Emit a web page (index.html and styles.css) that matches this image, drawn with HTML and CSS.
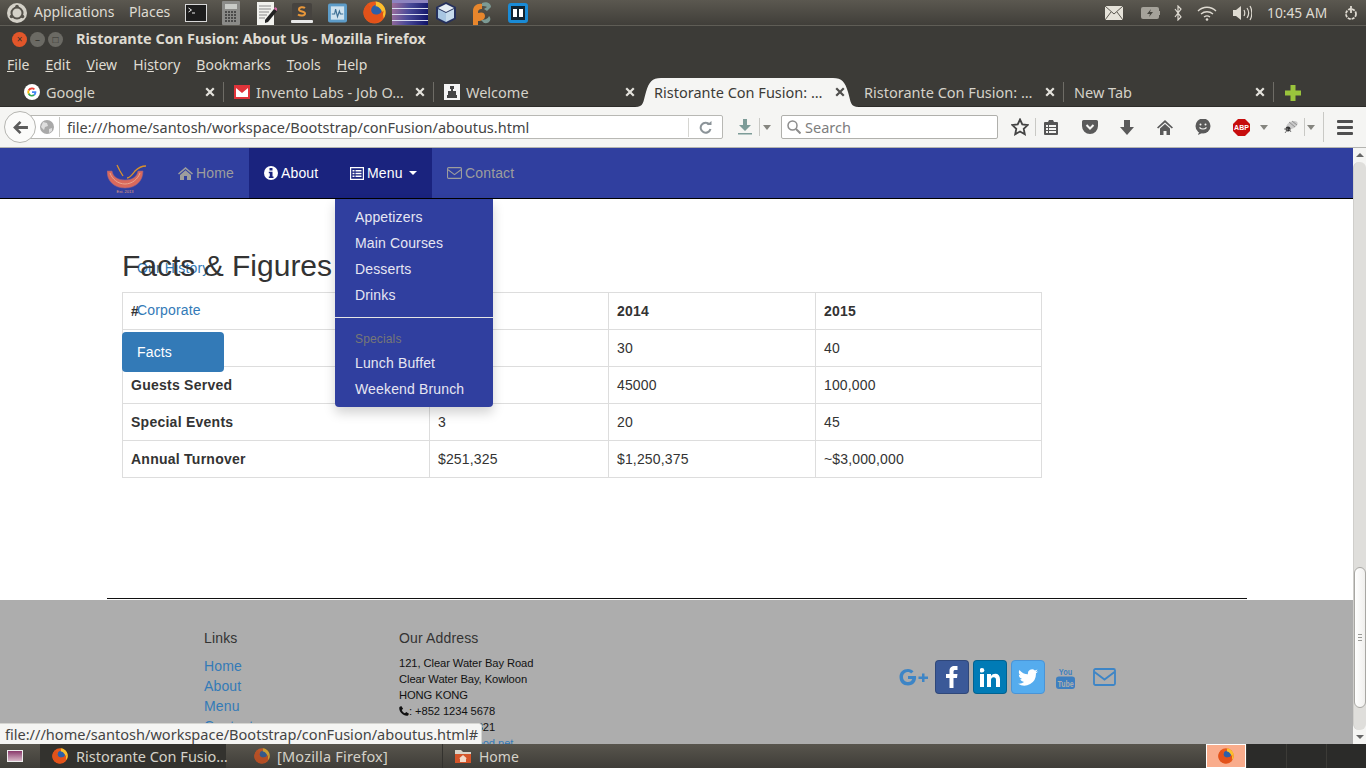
FILE: index.html
```html
<!DOCTYPE html>
<html lang="en">
<head>
    <meta charset="UTF-8">
    <meta name="viewport" content="width=device-width, initial-scale=1.0">
    <title>Ristorante Con Fusion: About Us</title>
    <link rel="stylesheet" href="styles.css">
</head>
<body>
    <svg class="defs" width="0" height="0">
        <symbol id="firefox" viewBox="0 0 24 24">
            <circle cx="12" cy="12" r="11.500" fill="#e8591c"/>
            <circle cx="14" cy="9.500" r="5.500" fill="#2c5fa8"/>
            <path d="M13 .5c5 0 10 4.500 10.500 10 .3 3-.5 5.500-2 7.500-.5-4-1-7-3-9.500C16.500 6 14.500 5 13 5.500 14 3.500 13.500 2 13 .5z" fill="#fbc02d"/>
            <path d="M2 7c1-2 2.500-3.500 4-4.500C5.500 4 6 5 7.500 5.500 7 7.500 7 9 8 11c1.500 2.500 4 3.500 7 3 3-.5 5-2 6.500-4-.5 7-5 13-10 13C5 23 .5 18 .5 12 .5 10 1 8.500 2 7z" fill="#e2521a"/>
        </symbol>
        <symbol id="close" viewBox="0 0 10 10">
            <path d="M2 2l6 6M8 2l-6 6" stroke="#e4e2dc" stroke-width="2.200" stroke-linecap="square"/>
        </symbol>
        <symbol id="caret" viewBox="0 0 10 6">
            <path d="M0 0h10L5 6z" fill="#85857f"/>
        </symbol>
    </svg>

    <div class="screen">
        <!-- ubuntu panel -->
        <div class="panel">
            <svg class="panel-logo" viewBox="0 0 20 20">
                <circle cx="10" cy="10" r="10" fill="#d4d1c8"/>
                <circle cx="10" cy="10" r="5.500" fill="none" stroke="#55524b" stroke-width="2"/>
                <circle cx="10" cy="3.500" r="1.800" fill="#55524b"/>
                <circle cx="4.500" cy="13.500" r="1.800" fill="#55524b"/>
                <circle cx="15.500" cy="13.500" r="1.800" fill="#55524b"/>
            </svg>
            <span class="panel-menu apps">Applications</span>
            <span class="panel-menu places">Places</span>
            <div class="launchers">
                <svg class="launch launch-term" viewBox="0 0 22 20"><rect x=".5" y="1.500" width="21" height="17" fill="#1d1d1d" stroke="#d8d8d8"/><path d="M3.500 5l3 2-3 2M7 10h3" stroke="#eee" fill="none"/></svg>
                <svg class="launch launch-calc" viewBox="0 0 18 24"><rect width="18" height="24" rx="1" fill="#8b8b88"/><rect x="3" y="3" width="12" height="5" fill="#c9cbc7"/><path d="M3 11h12M3 14h12M3 17h12M3 20h12" stroke="#4b4b4a" stroke-width="2" stroke-dasharray="2 1"/></svg>
                <svg class="launch launch-edit" viewBox="0 0 20 24"><rect y="1" width="17" height="23" fill="#f2f2ee"/><path d="M2 5h12M2 8h12M2 11h10M2 14h8M2 17h6" stroke="#8a8a8a"/><path d="M8 19L17 8l3 2-9 11-3 1z" fill="#222"/><path d="M17 8l1-2 3 2-1 2z" fill="#d668a8"/></svg>
                <svg class="launch launch-subl" viewBox="0 0 22 22"><rect x="1" y="1" width="20" height="19" rx="2" fill="#46433f"/><rect y="18" width="22" height="3" rx="1" fill="#e8e8e8"/><path d="M14 6c-2-1.500-6-1-6 1.500S14 9 14 11.500 9 14 7 12.500" fill="none" stroke="#e8973a" stroke-width="2"/></svg>
                <svg class="launch launch-mon" viewBox="0 0 20 20"><rect width="20" height="20" rx="2" fill="#5d9cc8"/><rect x="3" y="3" width="14" height="14" fill="#cfe2ee"/><path d="M4 11h3l1-5 2 8 2-6 1 3h3" fill="none" stroke="#3c6e93" stroke-width="1.200"/></svg>
                <svg class="launch launch-fox"><use href="#firefox"/></svg>
                <div class="launch launch-eclipse"></div>
                <svg class="launch launch-box" viewBox="0 0 22 24"><path d="M11 1l10 5v12l-10 5-10-5V6z" fill="#25305c"/><path d="M11 3l8 4-8 4-8-4z" fill="#e6eef5"/><path d="M3 8l8 4v9l-8-4z" fill="#a9c6e2"/><path d="M19 8l-8 4v9l8-4z" fill="#c7dbec"/></svg>
                <svg class="launch launch-mat" viewBox="0 0 22 24"><path d="M2 24V10C2 5 6 2 11 3v5c-3 0-4 1-4 4 3-1 7-1 7 3s-4 5-7 5v4z" fill="#e8862c"/><path d="M11 2c4-2 9 0 9 4l-4 4-3-2 3-2c-1-1-3-1-5-1zM10 19c3 0 7-1 8-4 3 3 1 8-5 7z" fill="#7c9a94"/></svg>
                <svg class="launch launch-brack" viewBox="0 0 20 20"><rect width="20" height="20" rx="3" fill="#1a8bd6"/><rect x="3" y="3" width="14" height="14" fill="#12232f"/><path d="M9 6H5v8h4zM11 6h4v8h-4z" fill="#fff"/></svg>
            </div>
            <div class="tray">
                <svg class="tray-mail" viewBox="0 0 18 14"><rect width="18" height="14" fill="#e6e3da"/><path d="M0 0l9 8 9-8M0 14l6-8M18 14l-6-8" fill="none" stroke="#5a574f"/></svg>
                <svg class="tray-batt" viewBox="0 0 19 12"><rect width="18" height="12" rx="2" fill="#a5a29a"/><rect x="18" y="4" width="1" height="4" fill="#a5a29a"/><path d="M10 2L6 7h3l-1 3 4-5H9z" fill="#45433d"/></svg>
                <svg class="tray-blue" viewBox="0 0 8 16"><path d="M1 4l6 8-3 3V1l3 3-6 8" fill="none" stroke="#dfdbd2" stroke-width="1.200"/></svg>
                <svg class="tray-wifi" viewBox="0 0 20 16"><path d="M1 6c5-5 13-5 18 0M4 9c3.500-3 8.500-3 12 0M7 12c2-1.500 4-1.500 6 0" fill="none" stroke="#dfdbd2" stroke-width="1.300"/><circle cx="10" cy="14.500" r="1.300" fill="#dfdbd2"/></svg>
                <svg class="tray-vol" viewBox="0 0 20 16"><path d="M1 5h3l5-4v14l-5-4H1z" fill="#dfdbd2"/><path d="M12 5c1 2 1 4 0 6M15 3c2 3 2 7 0 10M18 1c2.500 4 2.500 10 0 14" fill="none" stroke="#dfdbd2" stroke-width="1.200"/></svg>
                <span class="tray-time">10:45 AM</span>
                <svg class="tray-power" viewBox="0 0 14 16"><circle cx="7" cy="9" r="5" fill="none" stroke="#dfdbd2" stroke-width="1.800" stroke-dasharray="3 1"/><path d="M7 1v7" stroke="#dfdbd2" stroke-width="1.800"/></svg>
            </div>
        </div>

        <!-- firefox window -->
        <div class="titlebar">
            <div class="win-btns">
                <span class="win-btn win-close">&#215;</span>
                <span class="win-btn win-min">&#8211;</span>
                <span class="win-btn win-max">&#9633;</span>
            </div>
            <span class="win-title">Ristorante Con Fusion: About Us - Mozilla Firefox</span>
        </div>
        <div class="menubar">
            <span><u>F</u>ile</span>
            <span><u>E</u>dit</span>
            <span><u>V</u>iew</span>
            <span>Hi<u>s</u>tory</span>
            <span><u>B</u>ookmarks</span>
            <span><u>T</u>ools</span>
            <span><u>H</u>elp</span>
        </div>
        <div class="tabbar">
            <div class="tab">
                <svg class="favicon" viewBox="0 0 16 16"><circle cx="8" cy="8" r="8" fill="#fff"/><path d="M8 3.500a4.500 4.500 0 0 1 3 1.200L9.800 6A2.800 2.800 0 0 0 5.400 7L3.900 5.800A4.500 4.500 0 0 1 8 3.500z" fill="#ea4335"/><path d="M3.900 5.800L5.400 7a2.800 2.800 0 0 0 0 2L3.900 10.200a4.500 4.500 0 0 1 0-4.400z" fill="#fbbc05"/><path d="M3.900 10.200L5.400 9a2.800 2.800 0 0 0 4 1.300l1.400 1.200A4.500 4.500 0 0 1 3.900 10.200z" fill="#34a853"/><path d="M8 7.200h4.300c.3 1.700-.3 3.200-1.500 4.300L9.400 10.300c.5-.3.800-.8 1-1.400H8z" fill="#4285f4"/></svg>
                <span class="tab-label">Google</span>
                <svg class="tab-close"><use href="#close"/></svg>
            </div>
            <div class="tab">
                <svg class="favicon" viewBox="0 0 16 14"><rect width="16" height="14" fill="#e0343a"/><path d="M2 3v9h12V3L8 8z" fill="#fff"/></svg>
                <span class="tab-label">Invento Labs - Job O&#8230;</span>
                <svg class="tab-close"><use href="#close"/></svg>
            </div>
            <div class="tab">
                <svg class="favicon" viewBox="0 0 16 16"><rect width="16" height="16" fill="#f4f4f4"/><path d="M6 2h4v3H9v2h3v4h1v3H3v-3h1V7h3V5H6z" fill="#444"/></svg>
                <span class="tab-label">Welcome</span>
                <svg class="tab-close"><use href="#close"/></svg>
            </div>
            <div class="tab tab-active">
                <svg class="tab-shape" viewBox="0 0 224 29" preserveAspectRatio="none"><path d="M0 29c9 0 8-5 11-15C14 4 17 0 26 0h172c9 0 12 4 15 14 3 10 2 15 11 15z" fill="#f5f5f3"/></svg>
                <span class="tab-label">Ristorante Con Fusion: &#8230;</span>
                <svg class="tab-close tab-close-dark"><use href="#close"/></svg>
            </div>
            <div class="tab">
                <span class="tab-label">Ristorante Con Fusion: &#8230;</span>
                <svg class="tab-close"><use href="#close"/></svg>
            </div>
            <div class="tab">
                <span class="tab-label">New Tab</span>
                <svg class="tab-close"><use href="#close"/></svg>
            </div>
            <svg class="tab-new" viewBox="0 0 16 16"><path d="M5.500 0h5v5.500H16v5h-5.500V16h-5v-5.500H0v-5h5.500z" fill="#9ac43c"/></svg>
        </div>
        <div class="toolbar">
            <div class="back-btn">
                <svg viewBox="0 0 16 14" width="15" height="13"><path d="M7 0L0 7l7 7 2-2-3.500-3.500H16v-3H5.500L9 2z" fill="#5c5c5c"/></svg>
            </div>
            <div class="urlbar">
                <svg class="url-globe" viewBox="0 0 14 14"><circle cx="7" cy="7" r="7" fill="#a9a9a9"/><path d="M3 2l4 1 1 3-3 1-1 3-3-3zM9 9l3-1 0 3-3 2z" fill="#dedede"/></svg>
                <span class="url-text">file:///home/santosh/workspace/Bootstrap/conFusion/aboutus.html</span>
                <svg class="url-reload" viewBox="0 0 12 13"><path d="M10 3.500A5 5 0 1 0 11 8" fill="none" stroke="#8b9398" stroke-width="2"/><path d="M7 4h5V0z" fill="#8b9398"/></svg>
            </div>
            <div class="tool-download">
                <svg viewBox="0 0 14 16" width="14" height="16"><path d="M5 0h4v6h4L7 12 1 6h4z" fill="#7d9c98"/><rect y="14" width="14" height="1.500" fill="#7d9c98"/></svg>
                <i class="tool-sep"></i>
                <svg class="tool-caret"><use href="#caret"/></svg>
            </div>
            <div class="searchbar">
                <svg viewBox="0 0 14 14" width="14" height="14"><circle cx="5.500" cy="5.500" r="4.500" fill="none" stroke="#8c8c8c" stroke-width="1.500"/><path d="M9 9l4.500 4.500" stroke="#8c8c8c" stroke-width="2"/></svg>
                <span>Search</span>
            </div>
            <div class="tool-icons">
                <svg class="ti-star" viewBox="0 0 18 18"><path d="M9 1.500l2.300 5 5.400.6-4 3.700 1.100 5.400L9 13.500l-4.800 2.700 1.100-5.400-4-3.700 5.400-.6z" fill="none" stroke="#444" stroke-width="1.800"/></svg>
                <i class="tool-sep sep-star"></i>
                <svg class="ti-clip" viewBox="0 0 14 16"><path d="M1 3h3l1-2h4l1 2h3a1 1 0 0 1 1 1v11a1 1 0 0 1-1 1H1a1 1 0 0 1-1-1V4a1 1 0 0 1 1-1z" fill="#555"/><path d="M2 6h2v2H2zM5 6h7v2H5zM2 9h2v2H2zM5 9h7v2H5zM2 12h2v2H2zM5 12h7v2H5z" fill="#f5f5f3"/></svg>
                <svg class="ti-pocket" viewBox="0 0 16 14"><path d="M1.500 0h13A1.500 1.500 0 0 1 16 1.500V6A8 8 0 0 1 0 6V1.500A1.500 1.500 0 0 1 1.500 0z" fill="#5a5a5a"/><path d="M4.500 5L8 8.500 11.500 5" fill="none" stroke="#f5f5f3" stroke-width="2"/></svg>
                <svg class="ti-down" viewBox="0 0 14 15"><path d="M4 0h6v7h4l-7 8-7-8h4z" fill="#5a5a5a"/></svg>
                <svg class="ti-home" viewBox="0 0 16 15"><path d="M8 0l8 7.500-1.200 1L8 2.500 1.200 8.500 0 7.500z" fill="#5a5a5a"/><path d="M8 4l5 4.500V15H9.500v-4h-3v4H3V8.500z" fill="#5a5a5a"/></svg>
                <svg class="ti-chat" viewBox="0 0 16 16"><circle cx="8" cy="7" r="7.500" fill="#5a5a5a"/><path d="M4 13l-1 3 4-2z" fill="#5a5a5a"/><circle cx="5.500" cy="5.500" r="1" fill="#f5f5f3"/><circle cx="10.500" cy="5.500" r="1" fill="#f5f5f3"/><path d="M4.500 8.500c2 2 5 2 7 0" fill="none" stroke="#f5f5f3" stroke-width="1.200"/></svg>
                <svg class="ti-abp" viewBox="0 0 17 17"><path d="M5 0h7l5 5v7l-5 5H5l-5-5V5z" fill="#c70d0d"/><text x="8.500" y="11" text-anchor="middle" class="abp-text">ABP</text></svg>
                <svg class="tool-caret ti-caret1"><use href="#caret"/></svg>
                <svg class="ti-fly" viewBox="0 0 16 14"><ellipse cx="9" cy="5" rx="6" ry="3.500" fill="#c9c9c9" transform="rotate(-25 9 5)"/><path d="M6 2l6 5M9 1l5 4" stroke="#777" stroke-width=".7"/><circle cx="5" cy="9" r="2.500" fill="#333"/><path d="M2 13l3-4M1 9h4M8 12l-2-3" stroke="#777"/></svg>
                <i class="tool-sep sep-fly"></i>
                <svg class="tool-caret ti-caret2"><use href="#caret"/></svg>
                <i class="tool-sep sep-last"></i>
                <div class="burger"><i></i><i></i><i></i></div>
            </div>
        </div>

        <!-- the page itself -->
        <div class="page">
            <div class="viewport">
                <nav class="navbar">
                    <svg class="brand" viewBox="0 0 40 30">
                        <path d="M0 8h5c1 6 6 9 13 9s12-3 13-9h5c0 10-7 17-18 17S0 18 0 8z" fill="#d9695c" stroke="#8f5f8a" stroke-width=".6"/>
                        <path d="M3 10c2 6 8 11 15 11s13-5 15-11" fill="none" stroke="#eba58f"/>
                        <path d="M10 2l3 6 3 5M20 15c3 0 5-3 8-7 3-3 7-5 11-5" fill="none" stroke="#d9912b" stroke-width="1.300"/>
                        <text x="18" y="29.500" text-anchor="middle" class="brand-text">Est. 2013</text>
                    </svg>
                    <a class="nav-item nav-home">
                        <svg viewBox="0 0 15 13" width="15" height="13"><path d="M7.500 0l7.500 6.500-1 1.100-6.500-5.600L1 7.600 0 6.500z" fill="currentColor"/><path d="M7.500 3.200L13 8v5H9V9H6v4H2V8z" fill="currentColor"/></svg>
                        Home
                    </a>
                    <a class="nav-item nav-about nav-active">
                        <svg viewBox="0 0 14 14" width="14" height="14"><circle cx="7" cy="7" r="7" fill="#fff"/><rect x="5.500" y="2" width="3" height="2.500" fill="#1a237e"/><path d="M4.800 5.800h3.700v4.700h1V12H4.800v-1.500h1V7.300h-1z" fill="#1a237e"/></svg>
                        About
                    </a>
                    <a class="nav-item nav-menu nav-active">
                        <svg viewBox="0 0 14 13" width="14" height="13"><path d="M0 0h14v13H0zM1.200 1.200v10.600h11.600V1.200z" fill="#fff" fill-rule="evenodd"/><path d="M2.500 3h2v1.500h-2zM5.500 3h6v1.500h-6zM2.500 5.800h2v1.500h-2zM5.500 5.800h6v1.500h-6zM2.500 8.600h2v1.500h-2zM5.500 8.600h6v1.500h-6z" fill="#fff"/></svg>
                        Menu
                        <span class="nav-caret"></span>
                    </a>
                    <a class="nav-item">
                        <svg viewBox="0 0 14 11" width="15" height="12"><rect x=".5" y=".5" width="13" height="10" rx="1" fill="none" stroke="currentColor"/><path d="M1 2.500l6 4.500 6-4.500" fill="none" stroke="currentColor"/></svg>
                        Contact
                    </a>
                </nav>
                <main class="main">
                    <h2 class="section-title">Facts &amp; Figures</h2>
                    <table class="facts">
                        <thead>
                            <tr><th>#</th><th>2013</th><th>2014</th><th>2015</th></tr>
                        </thead>
                        <tbody>
                            <tr><th>Employees</th><td>15</td><td>30</td><td>40</td></tr>
                            <tr><th>Guests Served</th><td>15000</td><td>45000</td><td>100,000</td></tr>
                            <tr><th>Special Events</th><td>3</td><td>20</td><td>45</td></tr>
                            <tr><th>Annual Turnover</th><td>$251,325</td><td>$1,250,375</td><td>~$3,000,000</td></tr>
                        </tbody>
                    </table>
                </main>
                <hr class="rule">
                <footer class="footer">
                    <div class="foot-links">
                        <h5>Links</h5>
                        <a>Home</a>
                        <a>About</a>
                        <a>Menu</a>
                        <a>Contact</a>
                    </div>
                    <div class="foot-address">
                        <h5>Our Address</h5>
                        <address>
                            121, Clear Water Bay Road<br>
                            Clear Water Bay, Kowloon<br>
                            HONG KONG<br>
                            <svg viewBox="0 0 11 11" width="10" height="10"><path d="M2.500 0L4.500 3 3 4.500c.5 1.500 2 3 3.500 3.500L8 6.500l3 2-1 2c-5 1.500-11-5-9.500-9.500z" fill="#111"/></svg>: +852 1234 5678<br>
                            <svg viewBox="0 0 11 11" width="10" height="10"><rect y="2" width="11" height="8" fill="#111"/></svg>: +852 8765 4321<br>
                            <svg viewBox="0 0 11 11" width="10" height="10"><rect y="2" width="11" height="8" fill="#111"/></svg>: <a>confusion@food.net</a>
                        </address>
                    </div>
                    <div class="foot-social">
                        <svg class="so-gplus" viewBox="0 0 30 20"><path d="M10 2c2.500 0 4.500 1 5.500 2.500L13 6.500C12.300 5.500 11.300 5 10 5 7 5 5 7.200 5 10s2 5 5 5c2.300 0 3.700-1 4.200-3H10V9h8c.6 5.500-2.500 9.500-8 9.500C5 18.500 1.500 15 1.500 10S5 2 10 2z" fill="#3d85c6"/><path d="M24 6.500h2.500v3H30v2.500h-3.500v3H24v-3h-3.500V9.500H24z" fill="#3d85c6"/></svg>
                        <span class="so-btn so-fb"><svg viewBox="0 0 12 22" width="12" height="22"><path d="M3.500 22V12H0V8h3.500V5c0-3.500 2-5 5-5h3v4H9.500C8 4 7.500 4.500 7.500 6v2h4l-.5 4H7.500v10z" fill="#fff"/></svg></span>
                        <span class="so-btn so-in"><svg viewBox="0 0 20 19" width="20" height="19"><rect y="6" width="4" height="13" fill="#fff"/><circle cx="2" cy="2.300" r="2.300" fill="#fff"/><path d="M7 6h4v2c1-1.500 2.500-2.300 4.300-2.300 3 0 4.700 2 4.700 5.500V19h-4v-7c0-1.800-.7-2.800-2.300-2.800S11 10.500 11 12v7H7z" fill="#fff"/></svg></span>
                        <span class="so-btn so-tw"><svg viewBox="0 0 24 20" width="20" height="17"><path d="M24 2.400c-.9.400-1.800.7-2.800.8 1-.6 1.800-1.600 2.200-2.700-1 .6-2 1-3.100 1.200A4.900 4.900 0 0 0 12 6.200C8 6 4.300 4.100 1.700.9.400 3.100 1 6 3.200 7.400c-.8 0-1.600-.2-2.200-.6 0 2.400 1.700 4.500 3.900 5-.7.200-1.500.2-2.200.1.600 2 2.500 3.400 4.600 3.400A9.900 9.900 0 0 1 0 17.400 13.900 13.900 0 0 0 21.500 5c1-.7 1.800-1.600 2.500-2.600z" fill="#fff"/></svg></span>
                        <svg class="so-yt" viewBox="0 0 20 24"><text x="10" y="9.500" text-anchor="middle" textLength="14" lengthAdjust="spacingAndGlyphs" class="yt-you">You</text><rect y="11" width="20" height="13" rx="3" fill="#3d7fc0"/><text x="10" y="21.500" text-anchor="middle" textLength="17" lengthAdjust="spacingAndGlyphs" class="yt-tube">Tube</text></svg>
                        <svg class="so-mail" viewBox="0 0 23 18"><rect x="1" y="1" width="21" height="16" rx="1.500" fill="none" stroke="#3d85c6" stroke-width="1.800"/><path d="M1.500 4l10 7.500 10-7.500" fill="none" stroke="#3d85c6" stroke-width="1.800"/></svg>
                    </div>
                </footer>
            </div>
            <div class="scrollbar">
                <div class="sb-arrow"><span class="sb-up"></span></div>
                <div class="sb-track">
                    <div class="sb-thumb"><i></i><i></i><i></i></div>
                </div>
                <div class="sb-arrow"><span class="sb-down"></span></div>
            </div>

            <!-- things lying over the page -->
            <ul class="side-nav">
                <li><a>Our History</a></li>
                <li><a>Corporate</a></li>
                <li class="side-active"><a>Facts</a></li>
            </ul>
            <ul class="dropdown">
                <li><a>Appetizers</a></li>
                <li><a>Main Courses</a></li>
                <li><a>Desserts</a></li>
                <li><a>Drinks</a></li>
                <li class="divider"></li>
                <li class="drop-header">Specials</li>
                <li><a>Lunch Buffet</a></li>
                <li><a>Weekend Brunch</a></li>
            </ul>
            <div class="status">file:///home/santosh/workspace/Bootstrap/conFusion/aboutus.html#</div>
        </div>

        <!-- ubuntu window list -->
        <div class="taskbar">
            <div class="show-desktop"><span></span></div>
            <div class="task task-active">
                <svg class="task-fox"><use href="#firefox"/></svg>
                <span>Ristorante Con Fusio&#8230;</span>
            </div>
            <div class="task task-two">
                <svg class="task-fox task-dim"><use href="#firefox"/></svg>
                <span>[Mozilla Firefox]</span>
            </div>
            <div class="task task-home">
                <svg class="task-fox" viewBox="0 0 16 14"><path d="M0 1h6l2 2h8v11H0z" fill="#d9d4c9"/><rect y="5" width="16" height="9" fill="#d4552a"/><path d="M8 6l4 3.500h-1V13H5V9.500H4z" fill="#f3d9c8"/></svg>
                <span>Home</span>
            </div>
            <div class="workspaces">
                <div class="ws ws-active"><svg class="task-fox"><use href="#firefox"/></svg></div>
                <div class="ws"></div>
                <div class="ws"></div>
                <div class="ws"></div>
            </div>
        </div>
    </div>
</body>
</html>
```

FILE: styles.css
```css
* {
    box-sizing: border-box;
}
body {
    margin: 0;
    overflow: hidden;
    font-family: "Liberation Sans", Arial, sans-serif;
    font-size: 14px;
    color: #333;
    background: #3c3b37;
}
.defs {
    position: absolute;
}
.screen {
    width: 1366px;
    height: 768px;
    display: flex;
    flex-direction: column;
}

/* panel */
.panel {
    height: 26px;
    display: flex;
    align-items: center;
    padding-left: 7px;
    background: linear-gradient(#5b5850, #403e39);
    border-bottom: 1px solid #5f5d56;
    font-family: "Noto Sans", sans-serif;
    color: #dfdbd2;
}
.panel-logo {
    width: 20px;
    height: 20px;
}
.panel-menu {
    font-size: 14px;
    padding-bottom: 2px;
}
.apps {
    margin-left: 7px;
    width: 95px;
}
.places {
    width: 56px;
}
.launchers {
    display: flex;
    align-items: center;
    height: 25px;
}
.launch {
    display: block;
}
.launch-term {
    width: 22px;
    height: 20px;
}
.launch-calc {
    width: 18px;
    height: 24px;
    margin-left: 15px;
}
.launch-edit {
    width: 20px;
    height: 24px;
    margin-left: 17px;
}
.launch-subl {
    width: 22px;
    height: 22px;
    margin-left: 14px;
}
.launch-mon {
    width: 19px;
    height: 20px;
    margin-left: 15px;
}
.launch-fox {
    width: 23px;
    height: 23px;
    margin-left: 16px;
}
.launch-eclipse {
    width: 36px;
    height: 25px;
    margin-left: 6px;
    background-image:
        repeating-linear-gradient(transparent 0 5px, #d7dbf0 5px 6px),
        linear-gradient(100deg, #a0709c, #4a4a98 45%, #0e1268);
    border-top: 3px solid #8d84c0;
}
.launch-box {
    width: 22px;
    height: 24px;
    margin-left: 7px;
}
.launch-mat {
    width: 22px;
    height: 24px;
    margin-left: 14px;
}
.launch-brack {
    width: 20px;
    height: 20px;
    margin-left: 15px;
}
.tray {
    margin-left: auto;
    display: flex;
    align-items: center;
    height: 25px;
}
.tray-mail {
    width: 18px;
    height: 14px;
}
.tray-batt {
    width: 19px;
    height: 12px;
    margin-left: 18px;
}
.tray-blue {
    width: 8px;
    height: 16px;
    margin-left: 14px;
}
.tray-wifi {
    width: 20px;
    height: 16px;
    margin-left: 15px;
}
.tray-vol {
    width: 20px;
    height: 16px;
    margin-left: 15px;
}
.tray-time {
    width: 61px;
    margin-left: 15px;
    font-size: 13.800px;
    white-space: nowrap;
}
.tray-power {
    width: 14px;
    height: 16px;
    margin-left: 16px;
    margin-right: 8px;
}

/* window */
.titlebar {
    height: 26px;
    display: flex;
    align-items: center;
    background: #3c3b37;
    font-family: "Noto Sans", sans-serif;
}
.win-btns {
    display: flex;
    gap: 3px;
    margin-left: 12px;
}
.win-btn {
    width: 15px;
    height: 15px;
    border-radius: 50%;
    background: #6b6a64;
    color: #35342f;
    font-size: 10px;
    line-height: 15px;
    text-align: center;
}
.win-close {
    background: #e2562a;
}
.win-title {
    margin-left: 13px;
    padding-bottom: 3px;
    font-size: 14.500px;
    font-weight: 700;
    color: #dfdbd2;
    white-space: nowrap;
}
.menubar {
    height: 26px;
    display: flex;
    align-items: center;
    gap: 16px;
    padding: 0 0 2px 7px;
    background: #3c3b37;
    font-family: "Noto Sans", sans-serif;
    font-size: 14px;
    color: #dfdbd2;
}
.tabbar {
    height: 29px;
    display: flex;
    padding-left: 14px;
    background: #3c3b37;
    border-bottom: 1px solid #2d2c29;
    font-family: "Noto Sans", sans-serif;
    font-size: 14.500px;
    color: #d5d2c9;
}
.tab {
    position: relative;
    width: 210px;
    height: 28px;
    display: flex;
    align-items: center;
    padding-left: 10px;
}
.tab::after {
    content: "";
    position: absolute;
    right: 0;
    top: 4px;
    height: 20px;
    width: 1px;
    background: #6e6c66;
}
.tab:nth-child(3)::after,
.tab-active::after {
    display: none;
}
.favicon {
    width: 16px;
    height: 16px;
    margin-right: 6px;
    flex: none;
}
.tab-label {
    white-space: nowrap;
}
.tab-close {
    position: absolute;
    left: 191px;
    top: 9px;
    width: 10px;
    height: 10px;
}
.tab-active {
    color: #3c3b37;
    z-index: 1;
}
.tab-active .tab-label {
    position: relative;
}
.tab-shape {
    position: absolute;
    left: -9px;
    top: 0;
    width: 224px;
    height: 29px;
}
.tab-close-dark {
    filter: brightness(0.35);
}
.tab-new {
    width: 16px;
    height: 16px;
    margin: 7px 0 0 11px;
}

/* toolbar */
.toolbar {
    position: relative;
    height: 41px;
    display: flex;
    align-items: center;
    background: #f5f5f3;
    border-bottom: 1px solid #b4b4b0;
    font-family: "Noto Sans", sans-serif;
    font-size: 14.500px;
}
.back-btn {
    position: absolute;
    left: 4px;
    top: 4px;
    width: 32px;
    height: 32px;
    display: flex;
    align-items: center;
    justify-content: center;
    background: #fbfbfa;
    border: 1px solid #b5b5b1;
    border-radius: 50%;
    z-index: 1;
}
.urlbar {
    width: 693px;
    height: 24px;
    margin-left: 30px;
    display: flex;
    align-items: center;
    background: #fff;
    border: 1px solid #b8b8b4;
    border-radius: 0 2px 2px 0;
    color: #444;
}
.url-globe {
    width: 14px;
    height: 14px;
    margin-left: 9px;
}
.url-text {
    margin-left: 5px;
    padding-left: 7px;
    flex: 1;
    border-left: 1px solid #c9c9c5;
    line-height: 20px;
    white-space: nowrap;
}
.url-reload {
    width: 33px;
    height: 13px;
    padding: 3px 0;
    border-left: 1px solid #d6d6d2;
    box-sizing: content-box;
}
.tool-download {
    display: flex;
    align-items: center;
    margin-left: 15px;
}
.tool-sep {
    width: 1px;
    height: 18px;
    background: #c9c9c5;
    flex: none;
}
.tool-caret {
    width: 8px;
    height: 5px;
}
.tool-download .tool-sep {
    margin-left: 7px;
}
.tool-download .tool-caret {
    margin-left: 3px;
}
.searchbar {
    width: 217px;
    height: 24px;
    margin-left: 10px;
    display: flex;
    align-items: center;
    gap: 4px;
    padding-left: 5px;
    background: #fff;
    border: 1px solid #b0b0ac;
    border-radius: 2px;
    color: #7d7d7d;
}
.tool-icons {
    display: flex;
    align-items: center;
}
.ti-star {
    width: 18px;
    height: 18px;
    margin-left: 13px;
}
.sep-star {
    margin-left: 6px;
}
.ti-clip {
    width: 14px;
    height: 16px;
    margin-left: 8px;
}
.ti-pocket {
    width: 16px;
    height: 14px;
    margin-left: 24px;
}
.ti-down {
    width: 14px;
    height: 15px;
    margin-left: 22px;
}
.ti-home {
    width: 16px;
    height: 15px;
    margin-left: 23px;
}
.ti-chat {
    width: 16px;
    height: 16px;
    margin-left: 22px;
}
.ti-abp {
    width: 17px;
    height: 17px;
    margin-left: 22px;
}
.abp-text {
    font-family: "Liberation Sans", sans-serif;
    font-size: 7px;
    font-weight: 700;
    fill: #fff;
}
.ti-caret1 {
    margin-left: 10px;
}
.ti-fly {
    width: 16px;
    height: 14px;
    margin-left: 15px;
}
.sep-fly {
    margin-left: 5px;
}
.ti-caret2 {
    margin-left: 2px;
}
.sep-last {
    height: 30px;
    margin-left: 8px;
}
.burger {
    display: flex;
    flex-direction: column;
    gap: 3px;
    width: 16px;
    margin-left: 13px;
}
.burger i {
    display: block;
    height: 3px;
    background: #4f4f4f;
    border-radius: 1px;
}

/* page */
.page {
    position: relative;
    height: 596px;
    display: flex;
    overflow: hidden;
    background: #fff;
    letter-spacing: 0.15px;
}
.viewport {
    width: 1353px;
    height: 596px;
    overflow: hidden;
}
.navbar {
    height: 51px;
    display: flex;
    padding-left: 107px;
    background: #303f9f;
    border-bottom: 1px solid #000;
}
.brand {
    width: 40px;
    height: 30px;
    margin: 15px 16px 0 0;
}
.brand-text {
    font-size: 4px;
    letter-spacing: 0;
    fill: #e0a07c;
}
.nav-item {
    height: 50px;
    display: flex;
    align-items: center;
    gap: 3px;
    padding: 0 15px;
    color: #9d9d9d;
}
.nav-home,
.nav-about {
    width: 86px;
}
.nav-menu {
    width: 97px;
}
.nav-active {
    background: #1a237e;
    color: #fff;
}
.nav-caret {
    width: 0;
    height: 0;
    margin-left: 3px;
    border-top: 4px solid #fff;
    border-left: 4px solid transparent;
    border-right: 4px solid transparent;
}
.main {
    height: 399px;
    padding: 50px 0 0 122px;
}
.section-title {
    position: relative;
    z-index: 3;
    margin: 0 0 10px;
    font-size: 30px;
    font-weight: 400;
    line-height: 33px;
    letter-spacing: 0;
    color: #333;
}
.facts {
    width: 920px;
    border-collapse: collapse;
    line-height: 20px;
    table-layout: fixed;
}
.facts th,
.facts td {
    padding: 8px;
    border: 1px solid #ddd;
    text-align: left;
}
.facts th {
    letter-spacing: 0.25px;
}
.facts th:nth-child(1) {
    width: 307px;
}
.facts th:nth-child(2) {
    width: 179px;
}
.facts th:nth-child(3) {
    width: 207px;
}
.rule {
    width: 1140px;
    height: 1px;
    margin: 0 0 1px 107px;
    border: 0;
    background: #111;
}
.footer {
    height: 200px;
    display: flex;
    padding: 30px 0 0 204px;
    background: #adadad;
}
.footer h5 {
    margin: 0;
    font-size: 14px;
    font-weight: 400;
    line-height: 16px;
    color: #333;
}
.foot-links {
    width: 195px;
    display: flex;
    flex-direction: column;
    align-items: flex-start;
}
.foot-links h5 {
    margin-bottom: 10px;
}
.foot-links a {
    line-height: 20px;
    color: #337ab7;
}
.foot-address {
    width: 499px;
}
.foot-address h5 {
    margin-bottom: 9px;
}
.foot-address address {
    font-size: 11.200px;
    font-style: normal;
    line-height: 16px;
    letter-spacing: -0.08px;
    color: #111;
}
.foot-address address svg {
    vertical-align: -1px;
}
.foot-address a {
    color: #337ab7;
}
.foot-social {
    display: flex;
    align-items: center;
    height: 34px;
    margin-top: 30px;
}
.so-gplus {
    width: 30px;
    height: 20px;
    margin-right: 7px;
}
.so-btn {
    width: 34px;
    height: 34px;
    display: flex;
    align-items: center;
    justify-content: center;
    margin-right: 4px;
    border: 1px solid rgba(0, 0, 0, 0.2);
    border-radius: 4px;
}
.so-fb {
    background: #3b5998;
}
.so-in {
    background: #007bb6;
}
.so-tw {
    background: #55acee;
    border-color: #4a94d6;
}
.so-yt {
    width: 19px;
    height: 23px;
    margin-left: 7px;
}
.yt-you,
.yt-tube {
    font-family: "Liberation Sans Narrow", "Liberation Sans", sans-serif;
    font-weight: 700;
    letter-spacing: 0;
}
.yt-you {
    fill: #3d7fc0;
    font-size: 10px;
}
.yt-tube {
    fill: #adadad;
    font-size: 9px;
}
.so-mail {
    width: 23px;
    height: 18px;
    margin-left: 18px;
}

/* scrollbar */
.scrollbar {
    width: 13px;
    display: flex;
    flex-direction: column;
    background: #f5f5f3;
}
.sb-arrow {
    height: 14px;
    display: flex;
    align-items: center;
    justify-content: center;
}
.sb-up,
.sb-down {
    width: 0;
    height: 0;
    border-left: 4px solid transparent;
    border-right: 4px solid transparent;
}
.sb-up {
    border-bottom: 4px solid #666;
}
.sb-down {
    border-top: 4px solid #666;
}
.sb-track {
    flex: 1;
    padding: 405px 0 0;
    background: #dfdedb;
    border-radius: 6px;
    border-left: 1px solid #cfcecb;
}
.sb-thumb {
    height: 141px;
    display: flex;
    flex-direction: column;
    align-items: center;
    justify-content: center;
    gap: 2px;
    background: linear-gradient(90deg, #fff, #f0efed);
    border: 1px solid #a8a7a3;
    border-radius: 6px;
}
.sb-thumb i {
    width: 4px;
    height: 1px;
    background: #9a9a96;
}

/* overlays */
.side-nav {
    position: absolute;
    left: 122px;
    top: 100px;
    z-index: 2;
    width: 102px;
    margin: 0;
    padding: 0;
    list-style: none;
}
.side-nav li {
    height: 40px;
    margin-bottom: 2px;
    padding: 10px 15px;
    line-height: 20px;
    border-radius: 4px;
    color: #337ab7;
    white-space: nowrap;
}
.side-nav .side-active {
    background: #337ab7;
    color: #fff;
}
.dropdown {
    position: absolute;
    left: 335px;
    top: 51px;
    z-index: 4;
    width: 158px;
    margin: 0;
    padding: 5px 0;
    list-style: none;
    background: #303f9f;
    border-radius: 0 0 4px 4px;
    box-shadow: 0 6px 12px rgba(0, 0, 0, 0.175);
}
.dropdown a {
    display: block;
    padding: 3px 20px;
    line-height: 20px;
    color: #e6e6f2;
}
.divider {
    height: 1px;
    margin: 9px 0;
    background: #e5e5e5;
}
.drop-header {
    padding: 4px 20px 2px;
    font-size: 12px;
    line-height: 17px;
    color: #777;
}
.status {
    position: absolute;
    left: 0;
    bottom: 0;
    z-index: 5;
    width: 482px;
    height: 21px;
    padding: 0 5px;
    background: #f5f5f3;
    border: 1px solid #d5d5d1;
    border-left: 0;
    border-bottom: 0;
    border-radius: 0 3px 0 0;
    font-family: "Noto Sans", sans-serif;
    font-size: 14.550px;
    line-height: 20px;
    letter-spacing: 0;
    color: #444;
    white-space: nowrap;
}

/* window list */
.taskbar {
    height: 24px;
    display: flex;
    background: linear-gradient(#58554d, #3f3d38);
    font-family: "Noto Sans", sans-serif;
    font-size: 14.500px;
    color: #d5d2c9;
}
.show-desktop {
    width: 40px;
    display: flex;
    align-items: center;
    padding-left: 7px;
}
.show-desktop span {
    width: 16px;
    height: 12px;
    background: linear-gradient(#8a3a6c, #d8b8c8);
    border: 1px solid #eee;
}
.task {
    display: flex;
    align-items: center;
    gap: 8px;
    white-space: nowrap;
}
.task-active {
    width: 186px;
    padding-left: 12px;
    background: #33322e;
}
.task-two {
    width: 217px;
    padding-left: 28px;
    gap: 7px;
    border-right: 1px solid #33322e;
    letter-spacing: 0.2px;
}
.task-home {
    padding-left: 12px;
    font-size: 14px;
}
.task-fox {
    width: 16px;
    height: 16px;
    flex: none;
}
.task-dim {
    opacity: 0.7;
}
.workspaces {
    margin-left: auto;
    display: flex;
}
.ws {
    width: 40px;
    background: #2b2b29;
    border-left: 1px solid #3c3b37;
    display: flex;
    align-items: center;
    justify-content: center;
}
.ws-active {
    background: #f9ac8c;
    border: 1px solid #fff;
}
```
